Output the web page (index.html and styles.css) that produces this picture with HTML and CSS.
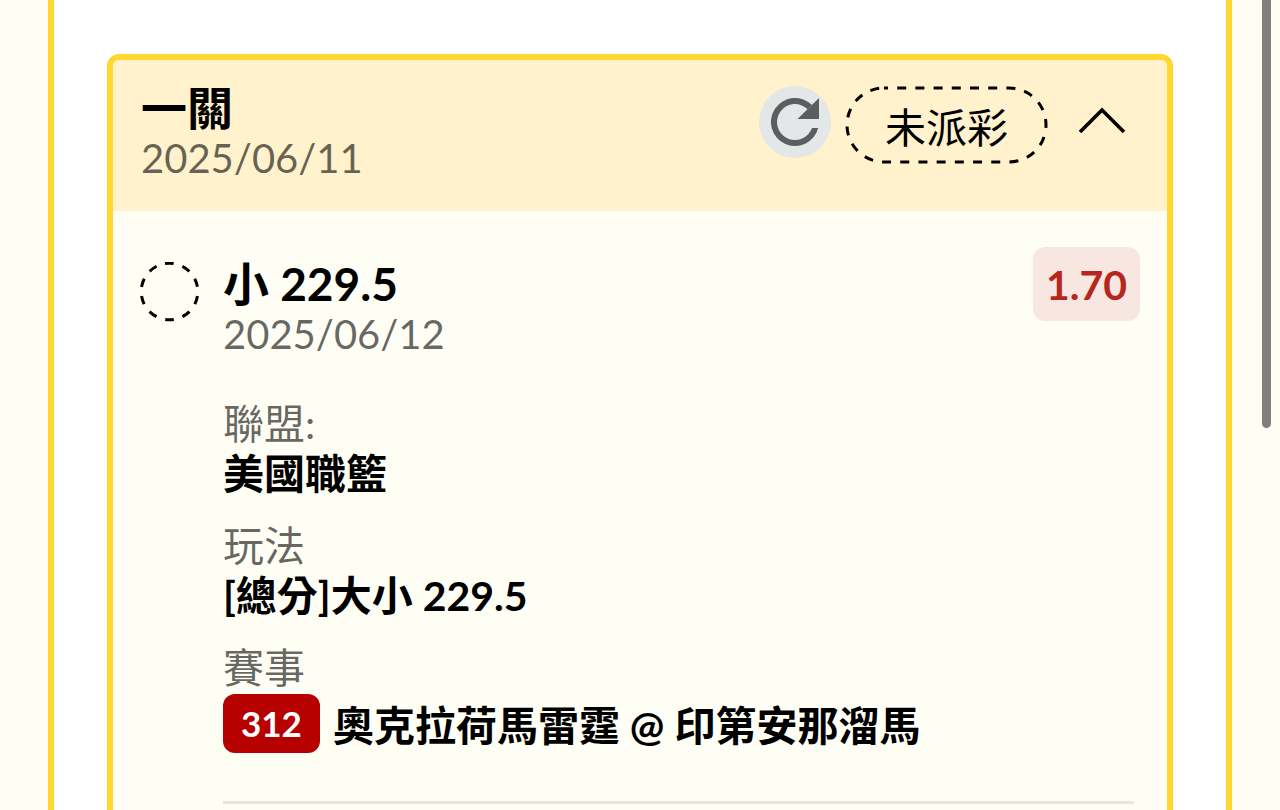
FILE: index.html
```html
<!DOCTYPE html>
<html lang="zh-Hant">
<head>
<meta charset="utf-8">
<meta name="viewport" content="width=device-width, initial-scale=1">
<title>投注紀錄</title>
<link rel="stylesheet" href="styles.css">
</head>
<body>
<main class="panel">
  <article class="ticket">
    <header class="ticket-header">
      <div class="heading">
        <h1 class="title">一關</h1>
        <time class="date" datetime="2025-06-11">2025/06/11</time>
      </div>
      <div class="actions">
        <button class="refresh" type="button" aria-label="重新整理">
          <svg class="refresh-icon" viewBox="0 0 72 72" aria-hidden="true">
            <path d="M59.2 42A24 24 0 1 1 53 19L48.7 23.3A18 18 0 1 0 53 42Z" fill="currentColor"/>
            <path d="M60 12V33H38.5Z" fill="currentColor"/>
          </svg>
        </button>
        <span class="status">
          <svg class="status-outline" aria-hidden="true"><rect class="status-shape" x="2" y="2" rx="37" ry="37"/></svg>
          未派彩
        </span>
        <button class="toggle" type="button" aria-label="收合" aria-expanded="true">
          <svg class="toggle-icon" viewBox="0 0 48 28" aria-hidden="true">
            <path d="M2 26L24 4L46 26" fill="none" stroke="currentColor" stroke-width="3.6"/>
          </svg>
        </button>
      </div>
    </header>
    <section class="bet">
      <svg class="pending" viewBox="0 0 60 60" aria-hidden="true">
        <circle cx="29.5" cy="29.5" r="28.3" fill="none" stroke="currentColor" stroke-width="3" stroke-dasharray="8.6 9.18" transform="rotate(-99 29.5 29.5)"/>
      </svg>
      <div class="bet-body">
        <div class="bet-top">
          <div class="heading">
            <h2 class="title">小 229.5</h2>
            <time class="date" datetime="2025-06-12">2025/06/12</time>
          </div>
          <span class="odds">1.70</span>
        </div>
        <dl class="details">
          <div class="detail">
            <dt class="label">聯盟:</dt>
            <dd class="value">美國職籃</dd>
          </div>
          <div class="detail">
            <dt class="label">玩法</dt>
            <dd class="value">[總分]大小 229.5</dd>
          </div>
          <div class="detail">
            <dt class="label">賽事</dt>
            <dd class="value match"><span class="code">312</span><span class="teams">奧克拉荷馬雷霆 @ 印第安那溜馬</span></dd>
          </div>
        </dl>
        <hr class="divider">
      </div>
    </section>
  </article>
</main>
<div class="scroll-thumb"></div>
</body>
</html>
```
FILE: styles.css
```css
* {
  box-sizing: border-box;
}

body {
  height: 100vh;
  margin: 0;
  padding: 0 48px;
  overflow: hidden;
  background: #fffef5;
  color: #000;
  font-family: Lato, "Noto Sans CJK TC", sans-serif;
  font-size: 41px;
  line-height: 50px;
}

h1, h2, dl, dd {
  margin: 0;
}

button {
  padding: 0;
  border: 0;
  background: none;
  color: inherit;
  cursor: pointer;
}

svg {
  display: block;
}

.panel {
  min-height: 100vh;
  padding: 54px 53px 0;
  border: solid #ffd72e;
  border-width: 0 6px;
  background: #fff;
}

.ticket {
  padding-bottom: 60px;
  border: 6px solid #ffd72e;
  border-radius: 12px;
  background: #fffef5;
}

.ticket-header {
  display: flex;
  justify-content: space-between;
  padding: 23px 41px 28px 28px;
  border-radius: 6px 6px 0 0;
  background: #fff2cc;
}

.title {
  font-size: 46px;
  font-weight: 700;
  line-height: 50px;
}

.date {
  display: block;
  color: rgba(0, 0, 0, 0.6);
  font-size: 40px;
}

.actions {
  display: flex;
  align-items: flex-start;
  padding-top: 3px;
}

.refresh {
  border-radius: 50%;
  background: #e3e7e8;
  color: #5b5e5f;
}

.refresh-icon {
  width: 72px;
  height: 72px;
}

.status {
  position: relative;
  margin-left: 14px;
  padding: 18px 40px 12px;
  line-height: 48px;
}

.status-outline {
  position: absolute;
  inset: 0;
  width: 100%;
  height: 100%;
}

.status-shape {
  width: calc(100% - 4px);
  height: calc(100% - 4px);
  fill: none;
  stroke: #000;
  stroke-width: 3;
  stroke-dasharray: 9 9.2;
  stroke-dashoffset: 5;
}

.toggle {
  margin: 20px 0 0 30px;
}

.toggle-icon {
  width: 48px;
  height: 28px;
}

.bet {
  display: flex;
  gap: 23px;
  padding: 36px 27px 0;
}

.pending {
  flex: none;
  width: 60px;
  height: 60px;
  margin-top: 15px;
}

.bet-body {
  flex: 1;
}

.bet-top {
  display: flex;
  align-items: flex-start;
  justify-content: space-between;
}

.bet-top .heading {
  padding-top: 12px;
}

.odds {
  padding: 13px 13px 11px;
  border-radius: 12px;
  background: #f8e7e0;
  color: #b7261d;
  font-weight: 700;
}

.details {
  display: flex;
  flex-direction: column;
  gap: 22px;
  margin-top: 40px;
}

.label {
  color: rgba(0, 0, 0, 0.6);
}

.value {
  font-weight: 700;
}

.match {
  display: flex;
  align-items: center;
  gap: 13px;
  padding-top: 1px;
}

.code {
  padding: 4px 18px 5px;
  border-radius: 12px;
  background: #b60000;
  color: #fff;
  font-size: 35px;
}

.teams {
  padding-top: 4px;
}

.divider {
  height: 3px;
  margin: 48px 6px 0 0;
  border: 0;
  background: #e8e5de;
}

.scroll-thumb {
  position: fixed;
  top: -8px;
  right: 9px;
  width: 9px;
  height: 436px;
  border-radius: 5px;
  background: #807f7b;
}
```
